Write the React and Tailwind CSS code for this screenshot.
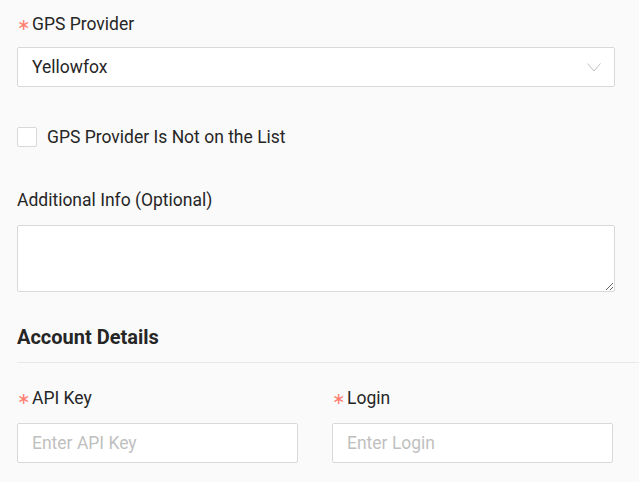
function Label({ children, required }) {
  return (
    <div className="flex items-center h-6 text-[17.5px] text-[#262626]">
      {required && (
        <span className="text-[#ff7d70] text-[16px] w-[15px] leading-none mt-[2px]" style={{ fontFamily: '"DejaVu Sans", sans-serif' }}>∗</span>
      )}
      <span>{children}</span>
    </div>
  );
}

export default function App() {
  return (
    <div className="h-[482px] w-[639px] overflow-hidden bg-[#fafafa] pl-[17px] pt-[12px]" style={{ fontFamily: 'Roboto, "Liberation Sans", sans-serif' }}>
      <Label required>GPS Provider</Label>
      <div className="mt-[11px] h-10 w-[598px] bg-white border border-[#d9d9d9] rounded-[2px] pl-[14px] pr-[13px] flex items-center justify-between text-[17.5px] text-[#262626]">
        <span>Yellowfox</span>
        <svg width="14" height="9" viewBox="0 0 14 9" fill="none">
          <polyline points="0.5,0.5 7,8 13.5,0.5" stroke="#bfbfbf" strokeWidth="1" />
        </svg>
      </div>

      <div className="mt-[40px] flex items-center gap-[10px] h-5">
        <div className="w-5 h-5 bg-white border border-[#d9d9d9] rounded-[2px]" />
        <span className="text-[17.5px] text-[#262626]">GPS Provider Is Not on the List</span>
      </div>

      <div className="mt-[41px]">
        <Label>Additional Info (Optional)</Label>
      </div>
      <textarea className="mt-[13px] block h-[67px] w-[598px] bg-white border border-[#d9d9d9] rounded-[2px] outline-none" />

      <div className="mt-[33px] border-b border-[#e8e8e8] pb-[13px]">
        <div className="h-6 flex items-center text-[20px] font-bold text-[#262626]">Account Details</div>
      </div>

      <div className="mt-[23px] grid grid-cols-[281px_281px] gap-x-[34px]">
        <div>
          <Label required>API Key</Label>
          <input placeholder="Enter API Key" className="mt-[13px] h-10 w-full bg-white border border-[#d9d9d9] rounded-[2px] px-[14px] text-[17.5px] outline-none placeholder:text-[#bfbfbf]" />
        </div>
        <div>
          <Label required>Login</Label>
          <input placeholder="Enter Login" className="mt-[13px] h-10 w-full bg-white border border-[#d9d9d9] rounded-[2px] px-[14px] text-[17.5px] outline-none placeholder:text-[#bfbfbf]" />
        </div>
      </div>
    </div>
  );
}
